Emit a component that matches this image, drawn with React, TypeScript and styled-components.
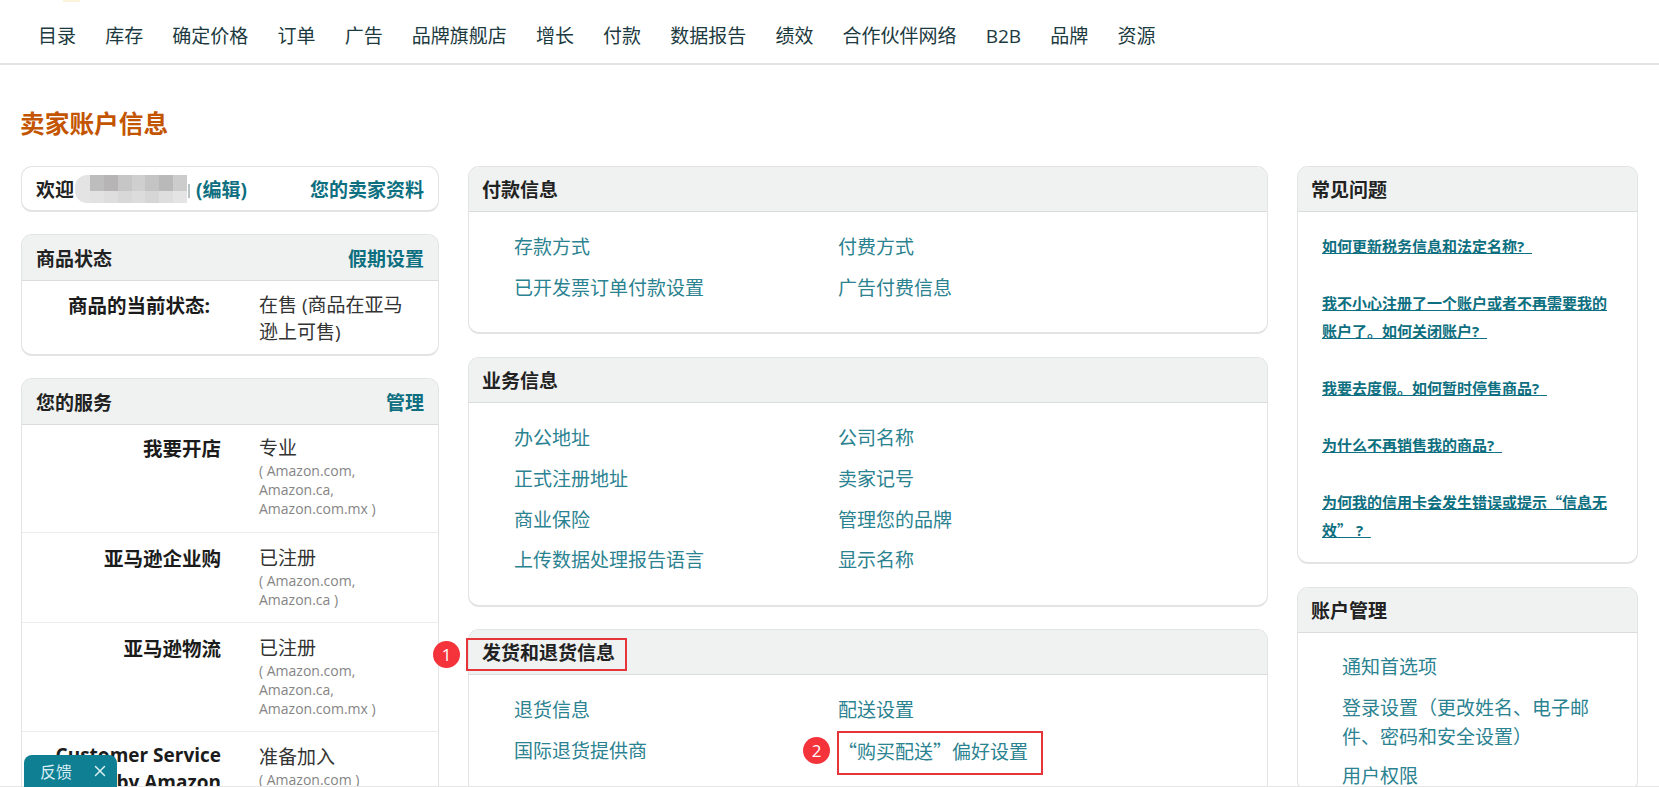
import React from 'react'
import styled, { createGlobalStyle } from 'styled-components'
import { X } from 'lucide-react'

const TEAL = '#2b8290'
const TEAL_BOLD = '#0d6f80'
const INK = '#1f2323'

const GlobalStyle = createGlobalStyle`
  * {
    box-sizing: border-box;
  }
  html, body {
    margin: 0;
    background: #fff;
    font-family: "Open Sans", "Noto Sans CJK SC", sans-serif;
    color: ${INK};
  }
`

const navItems = ['目录', '库存', '确定价格', '订单', '广告', '品牌旗舰店', '增长', '付款', '数据报告', '绩效', '合作伙伴网络', 'B2B', '品牌', '资源']

const services = [
  { name: '我要开店', state: '专业', markets: '( Amazon.com, Amazon.ca, Amazon.com.mx )' },
  { name: '亚马逊企业购', state: '已注册', markets: '( Amazon.com, Amazon.ca )' },
  { name: '亚马逊物流', state: '已注册', markets: '( Amazon.com, Amazon.ca, Amazon.com.mx )' },
  { name: 'Customer Service by Amazon', state: '准备加入', markets: '( Amazon.com )', latin: true },
]

const mosaicTones = [
  '#bdbdbd', '#b6b4b4', '#c6c6c6', '#cfcfcf', '#c4c4c4', '#b9b9b9', '#cccccc',
  '#e2e2e2', '#dedede', '#d8d8d8', '#dcdcdc', '#d6d6d6', '#dedede', '#e4e4e4',
]

export default function App() {
  return (
    <Page>
      <GlobalStyle />
      <Nav>
        <LogoSliver />
        <NavList>
          {navItems.map((item) => (
            <NavItem key={item}>{item}</NavItem>
          ))}
        </NavList>
      </Nav>
      <Title>卖家账户信息</Title>
      <Columns>
        <Column $gap={22}>
          <Welcome>
            <WelcomeName>
              欢迎
              <Mosaic>
                {mosaicTones.map((tone, i) => (
                  <MosaicCell key={i} $tone={tone} />
                ))}
              </Mosaic>
              <HeadLink>(编辑)</HeadLink>
            </WelcomeName>
            <HeadLink>您的卖家资料</HeadLink>
          </Welcome>
          <Card>
            <SideHead>
              商品状态
              <HeadLink>假期设置</HeadLink>
            </SideHead>
            <StatusRow>
              <ServiceName $inset={11}>商品的当前状态:</ServiceName>
              <ServiceValue>在售 (商品在亚马逊上可售)</ServiceValue>
            </StatusRow>
          </Card>
          <Card>
            <SideHead>
              您的服务
              <HeadLink>管理</HeadLink>
            </SideHead>
            {services.map((s) => (
              <ServiceRow key={s.name}>
                <ServiceName $latin={s.latin}>{s.name}</ServiceName>
                <div>
                  <ServiceValue>{s.state}</ServiceValue>
                  <Markets>{s.markets}</Markets>
                </div>
              </ServiceRow>
            ))}
          </Card>
        </Column>

        <Column $gap={22.5}>
          <Card>
            <CardHead>付款信息</CardHead>
            <LinkGrid>
              <PlainLink>存款方式</PlainLink>
              <PlainLink>付费方式</PlainLink>
              <PlainLink>已开发票订单付款设置</PlainLink>
              <PlainLink>广告付费信息</PlainLink>
            </LinkGrid>
          </Card>
          <Card>
            <CardHead>业务信息</CardHead>
            <LinkGrid>
              <PlainLink>办公地址</PlainLink>
              <PlainLink>公司名称</PlainLink>
              <PlainLink>正式注册地址</PlainLink>
              <PlainLink>卖家记号</PlainLink>
              <PlainLink>商业保险</PlainLink>
              <PlainLink>管理您的品牌</PlainLink>
              <PlainLink>上传数据处理报告语言</PlainLink>
              <PlainLink>显示名称</PlainLink>
            </LinkGrid>
          </Card>
          <Card>
            <CardHead>
              <Marked>
                发货和退货信息
                <TitleBox />
                <TitleBadge>1</TitleBadge>
              </Marked>
            </CardHead>
            <LinkGrid>
              <PlainLink>退货信息</PlainLink>
              <PlainLink>配送设置</PlainLink>
              <PlainLink>国际退货提供商</PlainLink>
              <PlainLink>
                <Marked>
                  <Cjk>“购买配送”偏好设置</Cjk>
                  <LinkBox />
                  <LinkBadge>2</LinkBadge>
                </Marked>
              </PlainLink>
            </LinkGrid>
          </Card>
        </Column>

        <Column $gap={23}>
          <Card>
            <CardHead>常见问题</CardHead>
            <FaqList>
              <FaqLink>如何更新税务信息和法定名称?{'\u00a0\u00a0'}</FaqLink>
              <FaqLink>我不小心注册了一个账户或者不再需要我的账户了。如何关闭账户?{'\u00a0\u00a0'}</FaqLink>
              <FaqLink>我要去度假。如何暂时停售商品?{'\u00a0\u00a0'}</FaqLink>
              <FaqLink>为什么不再销售我的商品?{'\u00a0\u00a0'}</FaqLink>
              <FaqLink>
                为何我的信用卡会发生错误或提示<Cjk>“信息无效”</Cjk> ?{'\u00a0\u00a0'}
              </FaqLink>
            </FaqList>
          </Card>
          <Card>
            <CardHead>账户管理</CardHead>
            <AccountList>
              <PlainLink>通知首选项</PlainLink>
              <PlainLink>登录设置<Cjk>（</Cjk>更改姓名、电子邮件、密码和安全设置<Cjk>）</Cjk></PlainLink>
              <PlainLink>用户权限</PlainLink>
            </AccountList>
          </Card>
        </Column>
      </Columns>
      <Feedback>
        反馈
        <X size={18} strokeWidth={2} />
      </Feedback>
    </Page>
  )
}

const Page = styled.div`
  position: relative;
  height: 787px;
  overflow: hidden;

  &::after {
    content: '';
    position: absolute;
    left: 0;
    right: 0;
    bottom: 0;
    height: 1px;
    background: #e6e6e6;
  }
`

const Nav = styled.nav`
  height: 65px;
  border-bottom: 2px solid #e3e3e3;
`

const LogoSliver = styled.div`
  width: 17px;
  height: 2px;
  margin-left: 63px;
  background: #fbf3dc;
`

const NavList = styled.div`
  display: flex;
  gap: 29.15px;
  padding: 21px 0 0 38px;
`

const NavItem = styled.span`
  font-size: 19px;
  line-height: 26px;
  color: #1c3a40;
`

const Title = styled.h1`
  margin: 0;
  padding: 42px 0 0 20px;
  font-size: 24.7px;
  line-height: 34px;
  font-weight: 700;
  color: #c45500;
`

const Columns = styled.div`
  display: grid;
  grid-template-columns: 418px 800px 341px;
  column-gap: 29px;
  align-items: start;
  padding: 25px 0 0 21px;
`

const Column = styled.div<{ $gap: number }>`
  display: flex;
  flex-direction: column;
  gap: ${(p) => p.$gap}px;
`

const Card = styled.section`
  border: 1px solid #e2e4e4;
  border-bottom-width: 2px;
  border-radius: 11px;
  background: #fff;
`

const CardHead = styled.header`
  display: flex;
  align-items: center;
  justify-content: space-between;
  height: 45px;
  padding: 0 14px 0 13px;
  background: #f0f2f2;
  border-bottom: 1px solid #d9dcdc;
  border-radius: 10px 10px 0 0;
  font-size: 19px;
  font-weight: 700;
  color: #222;
`

const SideHead = styled(CardHead)`
  height: 46px;
  padding-left: 14px;
`

const Welcome = styled(Card)`
  display: flex;
  align-items: center;
  justify-content: space-between;
  height: 46px;
  padding: 0 14px;
  font-size: 19px;
  font-weight: 700;
`

const WelcomeName = styled.div`
  display: flex;
  align-items: center;
`

const Mosaic = styled.div`
  position: relative;
  display: grid;
  grid-template-columns: repeat(7, 1fr);
  grid-template-rows: 16px 12px;
  width: 112px;
  height: 28px;
  margin: 0 9px 0 1px;
  padding-left: 15px;
  background: #e4e4e4;
  border-radius: 12px 0 0 12px;

  &::after {
    content: '';
    position: absolute;
    right: -3px;
    top: 9px;
    width: 2px;
    height: 14px;
    background: #b9c2c4;
  }
`

const MosaicCell = styled.i<{ $tone: string }>`
  display: block;
  background: ${(p) => p.$tone};
`

const HeadLink = styled.a`
  font-size: 19px;
  font-weight: 700;
  color: ${TEAL_BOLD};
`

const ServiceRow = styled.div`
  display: grid;
  grid-template-columns: 199px 1fr;
  column-gap: 38px;
  padding: 12px 20px 12px 0;
  border-bottom: 1px solid #eceeee;

  header + & {
    padding-top: 10px;
    padding-bottom: 13px;
  }
`

const StatusRow = styled(ServiceRow)`
  border-bottom: none;

  header + & {
    padding-top: 11px;
    padding-bottom: 8px;
  }
`

const ServiceName = styled.div<{ $inset?: number; $latin?: boolean }>`
  padding: 0 ${(p) => p.$inset ?? 0}px 0 25px;
  margin-top: ${(p) => (p.$latin ? -2 : 0)}px;
  text-align: right;
  font-size: ${(p) => (p.$latin ? 19 : 19.5)}px;
  line-height: 27px;
  font-weight: 700;
  color: #1b1b1b;
`

const ServiceValue = styled.div`
  font-size: 19px;
  line-height: 27px;
  color: #333;
`

const Markets = styled.div`
  margin: -1px 0 1px;
  font-size: 14px;
  line-height: 19px;
  color: #858585;
`

const LinkGrid = styled.div`
  display: grid;
  grid-template-columns: 324px 1fr;
  grid-auto-rows: 40.7px;
  align-items: center;
  padding: 15px 0 24px 45px;
`

const PlainLink = styled.a`
  font-size: 19px;
  line-height: 28px;
  color: ${TEAL};
`

const Cjk = styled.span`
  font-family: "Noto Sans CJK SC", sans-serif;
`

const Marked = styled.span`
  position: relative;
  display: inline-block;
`

const TitleBox = styled.span`
  position: absolute;
  left: -16px;
  right: -12px;
  top: 0;
  bottom: -5px;
  border: 2px solid #e5343a;
`

const LinkBox = styled.span`
  position: absolute;
  left: -1px;
  right: -15px;
  top: -6px;
  bottom: -9px;
  border: 2px solid #e5343a;
`

const Badge = styled.span`
  position: absolute;
  width: 27px;
  height: 27px;
  border-radius: 50%;
  background: #f4333b;
  color: #fff;
  font-size: 17px;
  line-height: 27px;
  font-weight: 400;
  text-align: center;
`

const TitleBadge = styled(Badge)`
  left: -49px;
  top: 3px;
`

const LinkBadge = styled(Badge)`
  left: -35px;
  top: 0;
`

const FaqList = styled.div`
  display: flex;
  flex-direction: column;
  gap: 29px;
  padding: 20px 25px 18px 24px;
`

const FaqLink = styled.a`
  font-size: 15px;
  line-height: 28px;
  font-weight: 700;
  text-decoration: underline;
  white-space: pre-wrap;
  color: ${TEAL_BOLD};
`

const AccountList = styled.div`
  display: flex;
  flex-direction: column;
  gap: 11.5px;
  padding: 20px 20px 0 44px;
`

const Feedback = styled.div`
  position: fixed;
  left: 24px;
  bottom: 0;
  display: flex;
  align-items: center;
  justify-content: space-between;
  width: 93px;
  height: 32px;
  padding: 0 8px 0 16px;
  border-radius: 8px 8px 0 0;
  background: #0f7f93;
  color: #d8eef2;
  font-size: 16px;
  z-index: 2;
`
